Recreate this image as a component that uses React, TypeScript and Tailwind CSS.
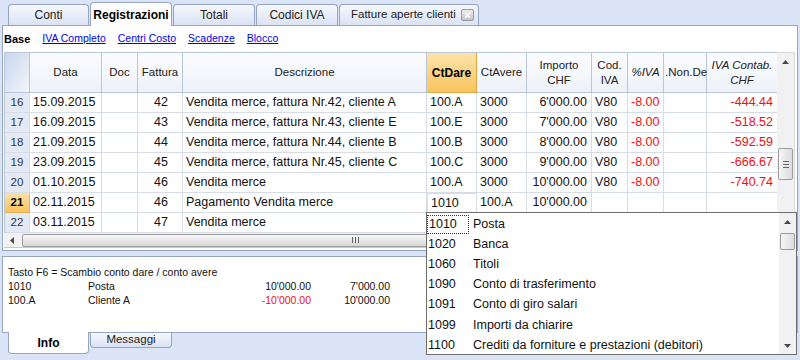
import React from "react";

const font = { fontFamily: '"Liberation Sans", Arial, sans-serif' };

const rows = [
  ["16", "15.09.2015", "", "42", "Vendita merce, fattura Nr.42, cliente A", "100.A", "3000", "6'000.00", "V80", "-8.00", "", "-444.44"],
  ["17", "16.09.2015", "", "43", "Vendita merce, fattura Nr.43, cliente E", "100.E", "3000", "7'000.00", "V80", "-8.00", "", "-518.52"],
  ["18", "21.09.2015", "", "44", "Vendita merce, fattura Nr.44, cliente B", "100.B", "3000", "8'000.00", "V80", "-8.00", "", "-592.59"],
  ["19", "23.09.2015", "", "45", "Vendita merce, fattura Nr.45, cliente C", "100.C", "3000", "9'000.00", "V80", "-8.00", "", "-666.67"],
  ["20", "01.10.2015", "", "46", "Vendita merce", "100.A", "3000", "10'000.00", "V80", "-8.00", "", "-740.74"],
  ["21", "02.11.2015", "", "46", "Pagamento Vendita merce", "1010", "100.A", "10'000.00", "", "", "", ""],
  ["22", "03.11.2015", "", "47", "Vendita merce", "", "", "", "", "", "", ""],
];

const accounts = [
  ["1010", "Posta"],
  ["1020", "Banca"],
  ["1060", "Titoli"],
  ["1090", "Conto di trasferimento"],
  ["1091", "Conto di giro salari"],
  ["1099", "Importi da chiarire"],
  ["1100", "Crediti da forniture e prestazioni (debitori)"],
];

const gridCols = "grid grid-cols-[25px_72px_36px_45px_244px_50px_50px_65px_36px_36px_43px_71px]";
const cell = "border-r border-b border-[#d6dde9] h-[20px] flex items-center whitespace-nowrap overflow-hidden";
const head = "border-r border-b border-[#b9c6da] h-[40px] flex items-center justify-center text-center text-[11.5px] leading-[15px] bg-gradient-to-b from-[#fbfcfe] to-[#eef2f8] text-[#222]";

function Tab({ label, w, active }: { label: string; w: string; active?: boolean }) {
  if (active) {
    return (
      <div className={`${w} h-[24px] mb-[-1px] z-10 bg-white border border-b-0 border-[#94a6c4] rounded-t-[4px] flex items-center justify-center font-bold text-[12px] text-black`}>
        {label}
      </div>
    );
  }
  return (
    <div className={`${w} h-[21px] border border-b-0 border-[#94a6c4] rounded-t-[4px] bg-gradient-to-b from-[#f6f8fd] to-[#dae2f3] flex items-center justify-center text-[12px] text-[#222]`}>
      {label}
    </div>
  );
}

function Arrow({ dir }: { dir: "up" | "down" | "left" }) {
  const pts = dir === "up" ? "0,4 3.5,0 7,4" : dir === "down" ? "0,0 3.5,4 7,0" : "4,0 0,3.5 4,7";
  return (
    <svg width={dir === "left" ? 4 : 7} height={dir === "left" ? 7 : 4}>
      <polygon points={pts} fill="#4a4a4a" />
    </svg>
  );
}

export default function App() {
  return (
    <div className="w-[800px] h-[360px] bg-[#dbe4f7] relative overflow-hidden flex flex-col text-[#111]" style={font}>
      {/* top tabs */}
      <div className="h-[25px] flex items-end pl-[8px] gap-[1px] shrink-0">
        <Tab label="Conti" w="w-[81px]" />
        <Tab label="Registrazioni" w="w-[82px]" active />
        <Tab label="Totali" w="w-[82px]" />
        <Tab label="Codici IVA" w="w-[82px]" />
        <div className="w-[140px] h-[21px] border border-b-0 border-[#94a6c4] rounded-t-[4px] bg-gradient-to-b from-[#f6f8fd] to-[#dae2f3] flex items-center pl-[11px] text-[11.5px] text-[#222] whitespace-nowrap">
          <span className="w-[110px]">Fatture aperte clienti</span>
          <span className="w-[13px] h-[12px] rounded-[2px] border border-[#9a9a9a] bg-gradient-to-b from-[#eeeeee] to-[#c4c4c4] text-white text-[11px] leading-[10px] flex items-center justify-center font-bold">
            ×
          </span>
        </div>
      </div>

      {/* main panel */}
      <div className="mx-[2px] h-[226px] border border-[#94a6c4] bg-white flex flex-col shrink-0">
        <div className="h-[26px] flex items-center pl-[1px] gap-[12px] text-[10.5px]">
          <span className="font-bold text-black text-[11px]">Base</span>
          <span className="text-[#0000ee] underline">IVA Completo</span>
          <span className="text-[#0000ee] underline">Centri Costo</span>
          <span className="text-[#0000ee] underline">Scadenze</span>
          <span className="text-[#0000ee] underline">Blocco</span>
        </div>

        <div className="flex pl-[1px]">
          <div className="w-[773px] border-l border-t border-[#b9c6da]">
            <div className={gridCols}>
              <div className="border-r border-b border-[#b9c6da] h-[40px] bg-gradient-to-br from-[#c9d6ec] to-[#f3f6fb]" />
              <div className={head}>Data</div>
              <div className={head}>Doc</div>
              <div className={head}>Fattura</div>
              <div className={head}>Descrizione</div>
              <div className="border-r border-b border-[#e0a640] h-[40px] flex items-center justify-center text-[12px] font-bold bg-gradient-to-b from-[#fde3a8] to-[#f8c45e] text-black">CtDare</div>
              <div className={head}>CtAvere</div>
              <div className={head}>Importo<br />CHF</div>
              <div className={head}>Cod.<br />IVA</div>
              <div className={`${head} italic`}>%IVA</div>
              <div className={`${head} !justify-start pl-[1px]`}>.Non.De</div>
              <div className={`${head} italic`}>IVA Contab.<br />CHF</div>
            </div>
            {rows.map((r) => {
              const sel = r[0] === "21";
              return (
                <div key={r[0]} className={`${gridCols} text-[12.5px]`}>
                  <div className={`${cell} justify-center text-[11.5px] ${sel ? "bg-gradient-to-b from-[#fde2a6] to-[#f8c35c] font-bold text-black border-[#e4b25a]" : "bg-[#e3eaf6] text-[#2e3548]"}`}>{r[0]}</div>
                  <div className={`${cell} pl-[3px]`}>{r[1]}</div>
                  <div className={cell}>{r[2]}</div>
                  <div className={`${cell} justify-end pr-[14px]`}>{r[3]}</div>
                  <div className={`${cell} pl-[3px]`}>{r[4]}</div>
                  <div className={`${cell} pl-[3px] ${sel ? "border border-[#4a4a4a] !border-b-[#4a4a4a]" : ""}`}>{r[5]}</div>
                  <div className={`${cell} pl-[3px]`}>{r[6]}</div>
                  <div className={`${cell} justify-end pr-[4px]`}>{r[7]}</div>
                  <div className={`${cell} pl-[3px]`}>{r[8]}</div>
                  <div className={`${cell} pl-[3px] text-[#ee1111]`}>{r[9]}</div>
                  <div className={cell}>{r[10]}</div>
                  <div className={`${cell} justify-end pr-[4px] text-[#ee1111]`}>{r[11]}</div>
                </div>
              );
            })}
          </div>
          {/* vertical scrollbar */}
          <div className="w-[18px] h-[181px] bg-[#f1f1f1] border-t border-r border-[#d8d8d8] flex flex-col items-center">
            <div className="h-[16px] flex items-center justify-center mt-[1px]"><Arrow dir="up" /></div>
            <div className="mt-[78px] w-[15px] h-[32px] rounded-[2px] border border-[#9c9c9c] bg-gradient-to-r from-[#f6f6f6] to-[#dcdcdc] flex flex-col items-center justify-center gap-[2px]">
              <div className="w-[6px] h-[1px] bg-[#666]" />
              <div className="w-[6px] h-[1px] bg-[#666]" />
              <div className="w-[6px] h-[1px] bg-[#666]" />
            </div>
          </div>
        </div>

        {/* horizontal scrollbar */}
        <div className="ml-[1px] w-[791px] h-[15px] bg-[#f1f1f1] border-b border-[#c8c8c8] flex items-center">
          <div className="w-[16px] flex justify-center"><Arrow dir="left" /></div>
          <div className="ml-[2px] w-[666px] h-[13px] rounded-[2px] border border-[#9c9c9c] bg-gradient-to-b from-[#f7f7f7] to-[#d6d6d6] flex items-center justify-center gap-[2px]">
            <div className="w-[1px] h-[6px] bg-[#666]" />
            <div className="w-[1px] h-[6px] bg-[#666]" />
            <div className="w-[1px] h-[6px] bg-[#666]" />
          </div>
        </div>
      </div>

      {/* info panel */}
      <div className="mx-[2px] mt-[5px] h-[77px] border border-[#94a6c4] bg-white pt-[8px] pl-[5px] text-[10.5px] leading-[14px] shrink-0">
        <div>Tasto F6 = Scambio conto dare / conto avere</div>
        <div className="grid grid-cols-[80px_100px_123px_79px]">
          <span>1010</span>
          <span>Posta</span>
          <span className="text-right">10'000.00</span>
          <span className="text-right">7'000.00</span>
          <span>100.A</span>
          <span>Cliente A</span>
          <span className="text-right text-[#ee1111]">-10'000.00</span>
          <span className="text-right">10'000.00</span>
        </div>
      </div>

      {/* bottom tabs */}
      <div className="flex pl-[8px] gap-[1px] items-start">
        <div className="w-[81px] h-[22px] mt-[-1px] bg-white border border-t-0 border-[#94a6c4] rounded-b-[4px] flex items-center justify-center font-bold text-[12px] text-black">Info</div>
        <div className="w-[82px] h-[15px] border border-t-0 border-[#94a6c4] rounded-b-[4px] bg-gradient-to-b from-[#f6f8fd] to-[#dae2f3] flex items-center justify-center text-[11.5px] text-[#222]">Messaggi</div>
      </div>

      {/* dropdown list */}
      <div className="absolute left-[426px] top-[212px] w-[371px] h-[143px] border border-[#6e6e6e] bg-white flex text-[12.5px]">
        <div className="flex-1 pt-[1px]">
          {accounts.map(([c, n], i) => (
            <div key={c} className="h-[20.2px] flex items-center">
              <span className={`w-[42px] pl-[1px] h-[19px] flex items-center ${i === 0 ? "border border-dotted border-[#333]" : ""}`}>{c}</span>
              <span className="pl-[4px]">{n}</span>
            </div>
          ))}
        </div>
        <div className="w-[17px] bg-[#f1f1f1] flex flex-col items-center">
          <div className="h-[17px] flex items-center justify-center"><Arrow dir="up" /></div>
          <div className="mt-[3px] w-[15px] h-[17px] rounded-[2px] border border-[#9c9c9c] bg-gradient-to-r from-[#f6f6f6] to-[#dcdcdc]" />
          <div className="flex-1" />
          <div className="h-[17px] flex items-center justify-center"><Arrow dir="down" /></div>
        </div>
      </div>
    </div>
  );
}
